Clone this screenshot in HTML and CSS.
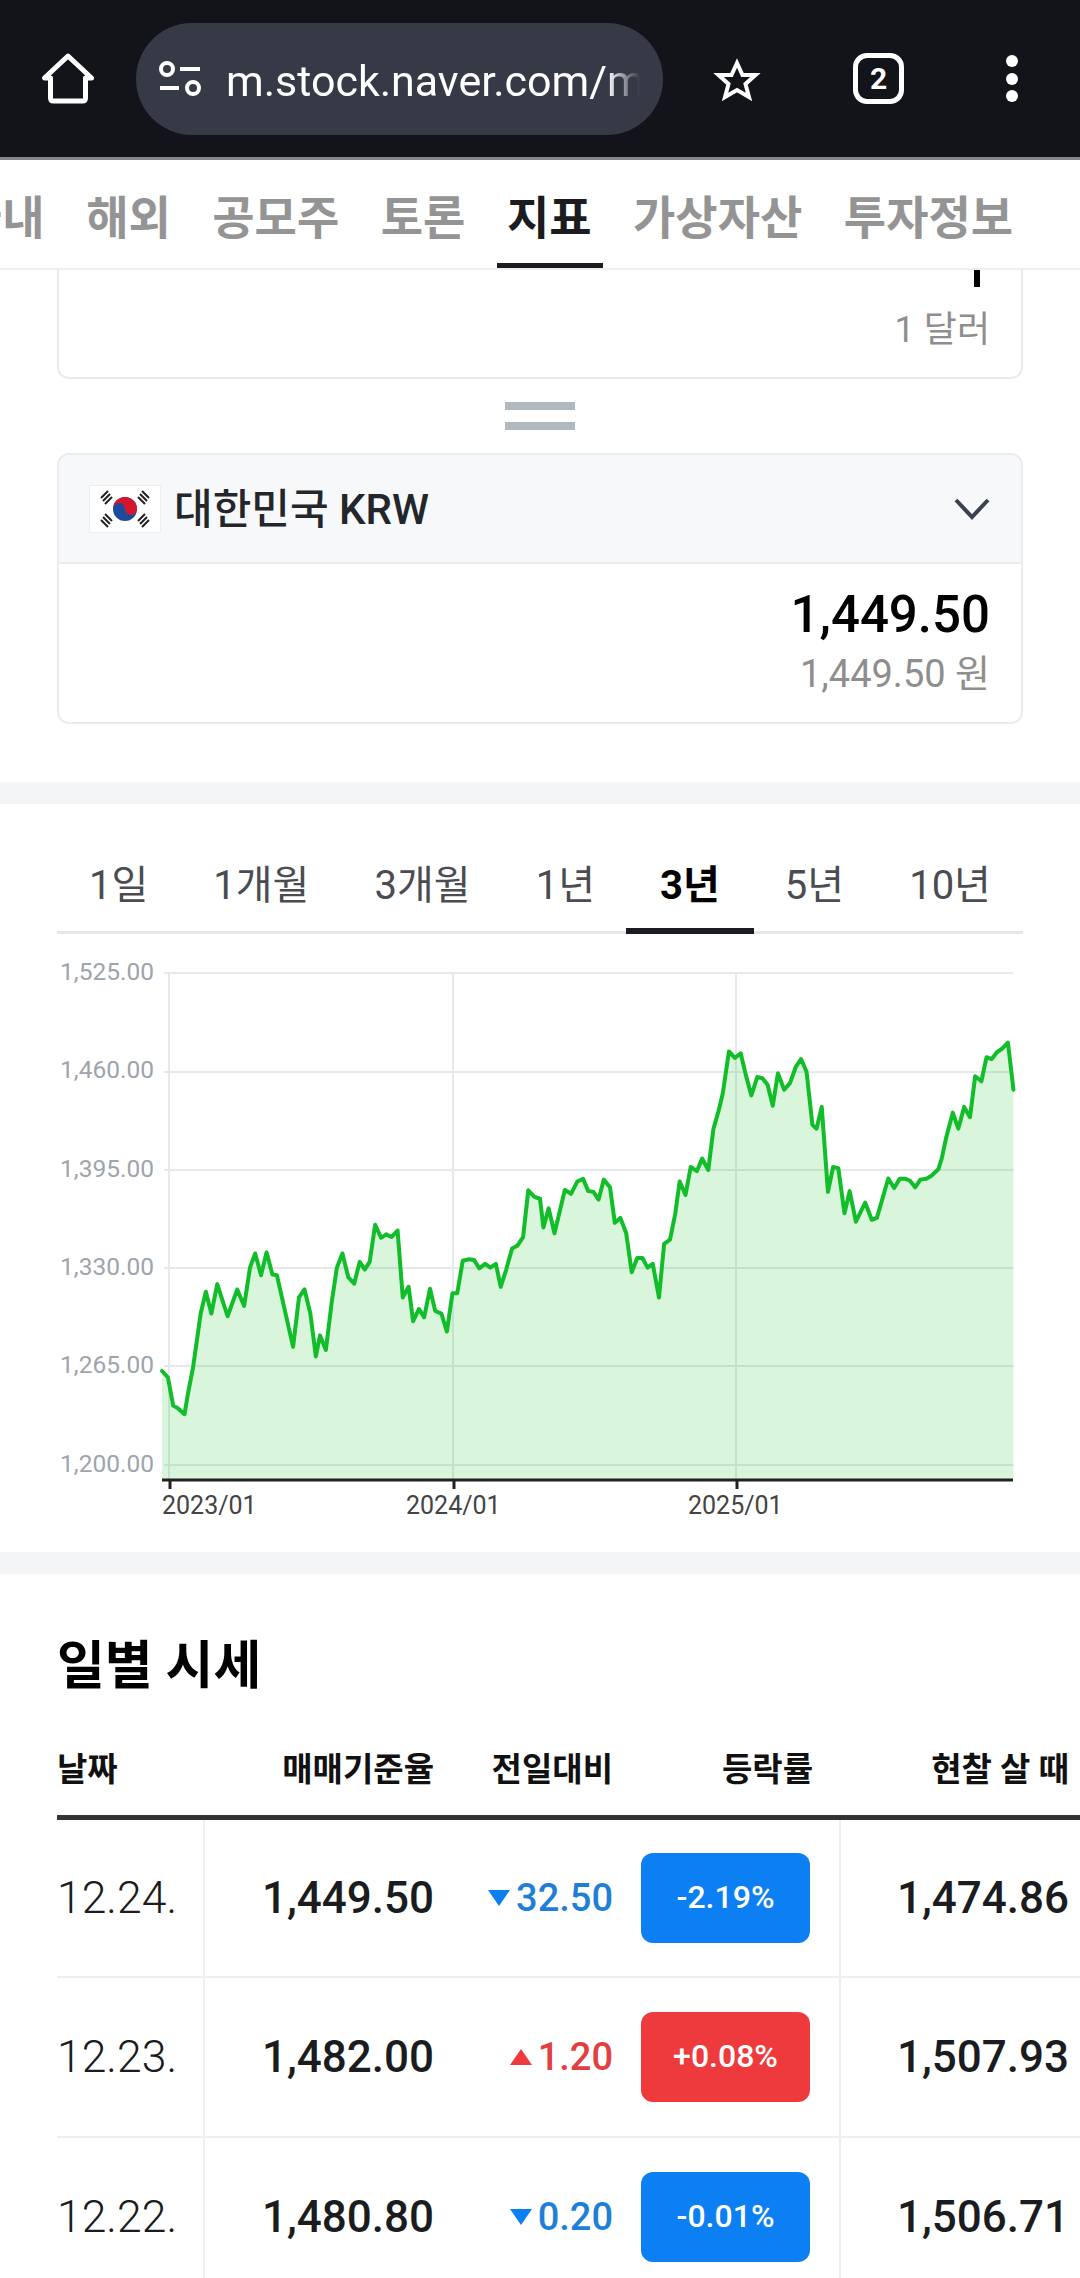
FILE: index.html
```html
<!DOCTYPE html>
<html lang="ko">
<head>
    <meta charset="UTF-8">
    <meta name="viewport" content="width=device-width, initial-scale=1.0">
    <title>m.stock.naver.com</title>
    <link rel="stylesheet" href="styles.css">
</head>
<body>
    <!-- Browser toolbar -->
    <div class="toolbar">
        <svg class="tool-home" width="54" height="54" viewBox="0 0 54 54">
            <path d="M28 4 L4.5 26 H10.5 V46 Q10.5 49 13.5 49 H42.5 Q45.5 49 45.5 46 V26 H51.5 Z" fill="none" stroke="#fff" stroke-width="5" stroke-linejoin="round"/>
        </svg>
        <div class="urlbar">
            <svg class="url-icon" width="44" height="44" viewBox="0 0 44 44">
                <circle cx="9" cy="12" r="6" fill="none" stroke="#fff" stroke-width="4"/>
                <path d="M22 12 H42 M2 31 H21" stroke="#fff" stroke-width="4"/>
                <circle cx="35" cy="31" r="6" fill="none" stroke="#fff" stroke-width="4"/>
            </svg>
            <div class="url-text">m.stock.naver.com/market</div>
        </div>
        <svg class="tool-star" width="52" height="56" viewBox="0 0 52 56">
            <path d="M26 12 L31.5 24 H44.5 L34.5 33 L38 46 L26 39 L14 46 L17.5 33 L7.5 24 H20.5 Z" fill="none" stroke="#fff" stroke-width="4" stroke-linejoin="miter" stroke-miterlimit="8"/>
        </svg>
        <div class="tool-tabs">2</div>
        <div class="tool-more"><span></span><span></span><span></span></div>
    </div>

    <!-- Section nav, scrolled sideways -->
    <div class="nav">
        <ul>
            <li>국내</li>
            <li>해외</li>
            <li>공모주</li>
            <li>토론</li>
            <li class="on">지표</li>
            <li>가상자산</li>
            <li>투자정보</li>
        </ul>
    </div>

    <!-- Currency calculator -->
    <div class="calc">
        <div class="box box-cut">
            <div class="cut-mark"></div>
            <div class="cur-unit">1 달러</div>
        </div>
        <div class="equals"><span></span><span></span></div>
        <div class="box">
            <div class="cur-head">
                <svg class="flag" width="70" height="46" viewBox="0 0 70 46">
                    <rect width="70" height="46" fill="#fff"/>
                    <circle cx="35" cy="23" r="12" fill="#1d4b9c"/>
                    <path d="M23 23 A12 12 0 0 1 47 23 A6 6 0 0 1 35 23 A6 6 0 0 0 23 23 Z" fill="#d5162d"/>
                    <g stroke="#222" stroke-width="2">
                        <path d="M11 12 L18 5 M13 15 L20 8 M15 18 L22 11"/>
                        <path d="M48 11 L55 18 M50 8 L57 15 M52 5 L59 12"/>
                        <path d="M11 34 L18 41 M13 31 L20 38 M15 28 L22 35"/>
                        <path d="M48 35 L55 28 M50 38 L57 31 M52 41 L59 34"/>
                    </g>
                </svg>
                <span class="cur-name">대한민국 KRW</span>
                <svg class="chevron" width="36" height="22" viewBox="0 0 36 22">
                    <path d="M2 2 L18 19 L34 2" fill="none" stroke="#39424e" stroke-width="4"/>
                </svg>
            </div>
            <div class="cur-body">
                <div class="cur-value">1,449.50</div>
                <div class="cur-sub">1,449.50 원</div>
            </div>
        </div>
    </div>

    <div class="band"></div>

    <!-- Period tabs and chart -->
    <div class="periods">
        <div class="period">1일</div>
        <div class="period">1개월</div>
        <div class="period">3개월</div>
        <div class="period">1년</div>
        <div class="period on">3년</div>
        <div class="period">5년</div>
        <div class="period">10년</div>
    </div>

    <svg class="chart" width="1080" height="602" viewBox="0 0 1080 602">
        <g class="grid">
            <path d="M164 23 H1013 M164 122 H1013 M164 220 H1013 M164 318 H1013 M164 416 H1013 M164 515 H1013"/>
            <path d="M169 23 V530 M453 23 V530 M736 23 V530"/>
        </g>
        <g class="y-labels">
            <text x="154" y="30">1,525.00</text>
            <text x="154" y="128">1,460.00</text>
            <text x="154" y="227">1,395.00</text>
            <text x="154" y="325">1,330.00</text>
            <text x="154" y="423">1,265.00</text>
            <text x="154" y="522">1,200.00</text>
        </g>
        <g transform="scale(0.34483,0.38270)">
            <polygon class="area" points="470,1385 470,1100 487,1117 502,1190 515,1197 535,1213 545,1160 560,1090 582,950 597,893 613,950 630,873 660,957 688,887 708,930 725,830 740,793 757,850 773,790 790,848 803,850 850,1037 867,908 883,887 900,950 916,1062 928,1007 945,1045 962,920 977,830 993,793 1010,855 1027,872 1043,815 1058,835 1072,815 1088,718 1105,752 1120,743 1135,750 1153,733 1168,908 1185,880 1198,970 1215,938 1230,960 1247,885 1262,943 1280,950 1296,997 1312,897 1326,897 1342,812 1360,808 1375,810 1390,832 1407,820 1422,830 1438,820 1452,880 1468,835 1485,780 1500,773 1517,750 1532,628 1550,645 1566,650 1566,1385"/>
            <polyline class="line" points="470,1100 487,1117 502,1190 515,1197 535,1213 545,1160 560,1090 582,950 597,893 613,950 630,873 660,957 688,887 708,930 725,830 740,793 757,850 773,790 790,848 803,850 850,1037 867,908 883,887 900,950 916,1062 928,1007 945,1045 962,920 977,830 993,793 1010,855 1027,872 1043,815 1058,835 1072,815 1088,718 1105,752 1120,743 1135,750 1153,733 1168,908 1185,880 1198,970 1215,938 1230,960 1247,885 1262,943 1280,950 1296,997 1312,897 1326,897 1342,812 1360,808 1375,810 1390,832 1407,820 1422,830 1438,820 1452,880 1468,835 1485,780 1500,773 1517,750 1532,628 1550,645 1566,650"/>
        </g>
        <g transform="translate(540,0) scale(0.34483,0.38270)">
            <polygon class="area" points="0,1385 0,650 10,725 25,675 42,740 72,627 90,637 108,605 125,598 140,630 155,632 170,652 185,600 203,620 217,713 233,700 250,740 266,842 282,805 297,805 312,830 327,820 345,908 360,768 377,757 392,690 405,605 422,640 437,567 455,578 470,545 488,575 503,467 518,420 530,375 548,265 565,282 582,270 597,327 613,380 630,332 645,335 660,352 675,407 690,322 708,365 725,348 742,305 757,285 773,318 790,457 802,467 817,410 835,632 850,567 865,570 883,688 898,630 916,710 943,660 962,705 977,700 1010,597 1027,622 1043,598 1060,598 1073,603 1088,620 1103,600 1120,598 1135,590 1155,573 1165,545 1178,490 1197,425 1213,467 1230,410 1247,437 1262,330 1280,343 1295,280 1310,285 1325,267 1340,258 1357,242 1373,365 1373,1385"/>
            <polyline class="line" points="0,650 10,725 25,675 42,740 72,627 90,637 108,605 125,598 140,630 155,632 170,652 185,600 203,620 217,713 233,700 250,740 266,842 282,805 297,805 312,830 327,820 345,908 360,768 377,757 392,690 405,605 422,640 437,567 455,578 470,545 488,575 503,467 518,420 530,375 548,265 565,282 582,270 597,327 613,380 630,332 645,335 660,352 675,407 690,322 708,365 725,348 742,305 757,285 773,318 790,457 802,467 817,410 835,632 850,567 865,570 883,688 898,630 916,710 943,660 962,705 977,700 1010,597 1027,622 1043,598 1060,598 1073,603 1088,620 1103,600 1120,598 1135,590 1155,573 1165,545 1178,490 1197,425 1213,467 1230,410 1247,437 1262,330 1280,343 1295,280 1310,285 1325,267 1340,258 1357,242 1373,365"/>
        </g>
        <path class="axis" d="M162 530 H1013"/>
        <path class="tick" d="M170 530 V539 M454 530 V539 M737 530 V539"/>
        <g class="x-labels">
            <text x="162" y="564">2023/01</text>
            <text x="406" y="564">2024/01</text>
            <text x="688" y="564">2025/01</text>
        </g>
    </svg>

    <div class="band"></div>

    <!-- Daily rates -->
    <div class="daily">
        <h2>일별 시세</h2>
        <table>
            <thead>
                <tr>
                    <th class="col-date">날짜</th>
                    <th class="col-rate">매매기준율</th>
                    <th class="col-change">전일대비</th>
                    <th class="col-pct">등락률</th>
                    <th class="col-buy">현찰 살 때</th>
                </tr>
            </thead>
            <tbody>
                <tr>
                    <td class="col-date">12.24.</td>
                    <td class="col-rate">1,449.50</td>
                    <td class="col-change down"><i class="arrow"></i>32.50</td>
                    <td class="col-pct"><span class="badge badge-down">-2.19%</span></td>
                    <td class="col-buy">1,474.86</td>
                </tr>
                <tr>
                    <td class="col-date">12.23.</td>
                    <td class="col-rate">1,482.00</td>
                    <td class="col-change up"><i class="arrow"></i>1.20</td>
                    <td class="col-pct"><span class="badge badge-up">+0.08%</span></td>
                    <td class="col-buy">1,507.93</td>
                </tr>
                <tr>
                    <td class="col-date">12.22.</td>
                    <td class="col-rate">1,480.80</td>
                    <td class="col-change down"><i class="arrow"></i>0.20</td>
                    <td class="col-pct"><span class="badge badge-down">-0.01%</span></td>
                    <td class="col-buy">1,506.71</td>
                </tr>
            </tbody>
        </table>
    </div>
</body>
</html>
```
FILE: styles.css
```css
html, body {
    height: 2278px;
    overflow: hidden;
}

body {
    margin: 0;
    background-color: #fff;
    color: #1a1c20;
    font-family: Roboto, "Noto Sans CJK KR", sans-serif;
}

/* Browser toolbar */
.toolbar {
    display: flex;
    align-items: center;
    height: 157px;
    background-color: #12141a;
    border-bottom: 3px solid #86878b;
}

.tool-home {
    flex: none;
    margin-left: 40px;
    margin-right: 42px;
}

.urlbar {
    display: flex;
    align-items: center;
    flex: none;
    width: 527px;
    height: 112px;
    border-radius: 56px;
    background-color: #363a47;
    box-sizing: border-box;
    padding-left: 22px;
    padding-right: 23px;
}

.url-icon {
    flex: none;
    margin-right: 24px;
}

.url-text {
    flex: 1;
    overflow: hidden;
    white-space: nowrap;
    margin-top: 4px;
    color: #fff;
    font-size: 43px;
    -webkit-mask-image: linear-gradient(to right, #000 92%, transparent 100%);
    mask-image: linear-gradient(to right, #000 92%, transparent 100%);
}

.tool-star {
    flex: none;
    margin-left: 48px;
}

.tool-tabs {
    flex: none;
    box-sizing: border-box;
    width: 51px;
    height: 51px;
    margin-left: 90px;
    border: 5px solid #fff;
    border-radius: 14px;
    color: #fff;
    font-size: 30px;
    font-weight: 700;
    line-height: 41px;
    text-align: center;
}

.tool-more {
    display: flex;
    flex-direction: column;
    gap: 5.5px;
    margin-left: 102px;
}

.tool-more span {
    display: block;
    width: 12px;
    height: 12px;
    border-radius: 50%;
    background-color: #fff;
}

/* Section nav */
.nav {
    height: 108px;
    border-bottom: 2px solid #eeeff1;
    overflow: hidden;
    background-color: #fff;
}

.nav ul {
    display: flex;
    list-style-type: none;
    margin: 0 0 0 -40px;
    padding: 0;
    gap: 41.5px;
    width: 1200px;
}

.nav li {
    position: relative;
    height: 108px;
    line-height: 116px;
    color: #949494;
    font-size: 46px;
    font-weight: 700;
    white-space: nowrap;
}

.nav li.on {
    color: #1a1c20;
}

.nav li.on::after {
    content: "";
    position: absolute;
    left: -10px;
    right: -11px;
    bottom: 0;
    height: 5px;
    background-color: #1a1c20;
}

/* Calculator */
.calc {
    padding: 0 57px;
    height: 512px;
}

.box {
    box-sizing: border-box;
    border: 2px solid #e9ebee;
    border-radius: 12px;
    overflow: hidden;
    height: 271px;
}

.box-cut {
    height: 109px;
    border-top: none;
    border-radius: 0 0 12px 12px;
    text-align: right;
    padding-right: 31px;
}

.cut-mark {
    width: 6px;
    height: 17px;
    background-color: #000;
    margin-left: auto;
    margin-right: 10px;
}

.cur-unit {
    margin-top: 23px;
    color: #8e8e8e;
    font-size: 36px;
    line-height: 40px;
}

.equals {
    display: flex;
    flex-direction: column;
    align-items: center;
    gap: 12px;
    padding-top: 23px;
    height: 51px;
}

.equals span {
    display: block;
    width: 70px;
    height: 8px;
    background-color: #b0b8c1;
}

.cur-head {
    display: flex;
    align-items: center;
    box-sizing: border-box;
    height: 109px;
    padding: 0 31px;
    background-color: #f7f8fa;
    border-bottom: 2px solid #e9ebee;
}

.flag {
    flex: none;
    margin-right: 14px;
    box-shadow: 0 0 0 1px #eceef0;
}

.cur-name {
    flex: 1;
    margin-bottom: 6px;
    font-size: 42px;
    font-weight: 500;
    color: #23262b;
}

.cur-body {
    padding: 22px 31px 0 0;
    text-align: right;
}

.cur-value {
    color: #000;
    font-size: 51px;
    font-weight: 500;
    line-height: 58px;
}

.cur-sub {
    color: #8e8e8e;
    font-size: 38px;
    line-height: 44px;
    margin-top: 8px;
}

.band {
    height: 22px;
    background-color: #f4f5f7;
}

/* Period tabs */
.periods {
    display: flex;
    justify-content: space-between;
    box-sizing: border-box;
    height: 130px;
    margin: 0 57px;
    padding-top: 55px;
    border-bottom: 3px solid #e5e6e8;
}

.period {
    position: relative;
    height: 75px;
    padding: 0 32px;
    color: #4a4c52;
    font-size: 40px;
    line-height: 54px;
    white-space: nowrap;
}

.period.on {
    color: #000;
    font-weight: 700;
}

.period.on::after {
    content: "";
    position: absolute;
    left: -2px;
    right: -2px;
    bottom: 0;
    height: 6px;
    background-color: #1a1c20;
}

/* Chart */
.chart {
    display: block;
    margin-top: 16px;
}

.grid path {
    fill: none;
    stroke: #e6e8ec;
    stroke-width: 2;
}

.area {
    fill: rgba(16, 190, 40, 0.16);
}

.line {
    fill: none;
    stroke: #12bd2a;
    stroke-width: 4px;
    stroke-linejoin: round;
    stroke-linecap: round;
    vector-effect: non-scaling-stroke;
}

.axis, .tick {
    fill: none;
    stroke: #222;
    stroke-width: 3;
}

.y-labels text {
    fill: #9ea4ab;
    font-size: 24.5px;
    text-anchor: end;
}

.x-labels text {
    fill: #444;
    font-size: 25px;
}

/* Daily table */
.daily {
    padding-left: 57px;
}

.daily h2 {
    margin: 0;
    padding-top: 65px;
    color: #000;
    font-size: 52px;
    font-weight: 700;
    line-height: 56px;
}

.daily table {
    table-layout: fixed;
    border-collapse: collapse;
    width: 1023px;
    margin-top: 34px;
}

.col-date { width: 147px; }
.col-rate { width: 230px; }
.col-change { width: 179px; }
.col-pct { width: 227px; }
.col-buy { width: 240px; }

.daily th {
    height: 88px;
    padding: 0 0 10px;
    box-sizing: border-box;
    border-bottom: 5px solid #333;
    color: #111;
    font-size: 33px;
    font-weight: 700;
    text-align: right;
    white-space: nowrap;
}

.daily th.col-date {
    text-align: left;
}

.daily th.col-pct {
    padding-right: 27px;
}

.daily th.col-buy {
    padding-right: 11px;
}

.daily td {
    height: 160px;
    padding: 0;
    box-sizing: border-box;
    border-bottom: 2px solid #eeeff1;
    text-align: right;
    white-space: nowrap;
}

.daily td.col-date {
    border-right: 2px solid #eeeff1;
    font-size: 44.5px;
    font-weight: 300;
    text-align: left;
}

.daily td.col-rate, .daily td.col-buy {
    font-size: 44px;
    font-weight: 500;
}

.daily td.col-buy {
    padding-right: 11px;
}

.daily td.col-change {
    font-size: 38px;
    font-weight: 500;
}

.daily td.col-pct {
    border-right: 2px solid #eeeff1;
    padding-right: 29px;
}

.down { color: #1f7fd6; }
.up { color: #e0403f; }

.arrow {
    display: inline-block;
    width: 0;
    height: 0;
    margin-right: 6px;
    border-left: 11px solid transparent;
    border-right: 11px solid transparent;
    vertical-align: 5px;
}

.down .arrow {
    border-top: 16px solid #0c7ff2;
}

.up .arrow {
    border-bottom: 16px solid #ee3a3d;
}

.badge {
    display: inline-block;
    width: 169px;
    height: 90px;
    border-radius: 12px;
    color: #fff;
    font-size: 32px;
    font-weight: 500;
    line-height: 88px;
    text-align: center;
    vertical-align: middle;
}

.badge-down { background-color: #0c7ff2; }
.badge-up { background-color: #ef3a3d; }
```
